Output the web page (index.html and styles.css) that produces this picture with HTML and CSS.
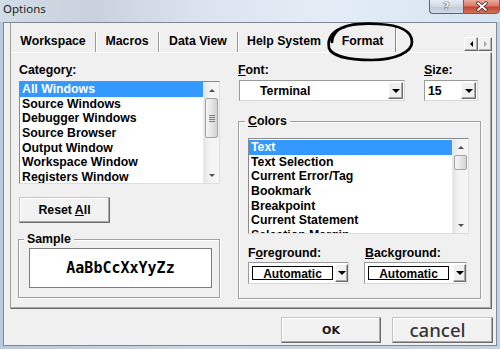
FILE: index.html
```html
<!DOCTYPE html>
<html>
<head>
<meta charset="utf-8">
<title>Options</title>
<link rel="stylesheet" href="styles.css">
</head>
<body>
<div class="window">
  <div class="titlebar">
    <span class="title">Options</span>
    <div class="caption">
      <div class="cap help"><span class="help-glyph">?</span></div>
      <div class="cap close">
        <svg width="14" height="11" viewBox="0 0 14 11">
          <path d="M3 2 L11 9 M11 2 L3 9" stroke="#3a2a2a" stroke-width="3.4" stroke-linecap="round"/>
          <path d="M3 2 L11 9 M11 2 L3 9" stroke="#ffffff" stroke-width="1.8" stroke-linecap="round"/>
        </svg>
      </div>
    </div>
  </div>
  <div class="client">
    <div class="tabframe">
      <div class="tabrow">
        <div class="tab t1">Workspace</div>
        <div class="tab t2">Macros</div>
        <div class="tab t3">Data View</div>
        <div class="tab t4">Help System</div>
        <div class="tab active">Format</div>
        <div class="tabscroll">
          <span class="ts-btn"><i class="tri-left"></i></span>
          <span class="ts-btn"><i class="tri-right"></i></span>
        </div>
      </div>
      <div class="page">
        <div class="col col-left">
          <div class="label lbl-cat">Categor<u>y</u>:</div>
          <div class="listbox lb-cat">
            <ul class="items">
              <li class="sel">All Windows</li>
              <li>Source Windows</li>
              <li>Debugger Windows</li>
              <li>Source Browser</li>
              <li>Output Window</li>
              <li>Workspace Window</li>
              <li>Registers Window</li>
            </ul>
            <div class="vscroll">
              <div class="sb-btn"><i class="arr-up"></i></div>
              <div class="sb-track">
                <div class="thumb thumb-cat"><span class="grip"></span></div>
              </div>
              <div class="sb-btn"><i class="arr-down"></i></div>
            </div>
          </div>
          <button class="btn reset">Reset <u>A</u>ll</button>
          <div class="group sample">
            <span class="legend">Sample</span>
            <div class="sample-box">AaBbCcXxYyZz</div>
          </div>
        </div>
        <div class="col col-right">
          <div class="pair">
            <div class="field-font">
              <div class="label"><u>F</u>ont:</div>
              <div class="combo combo-font">
                <span class="combo-text font-text">Terminal</span>
                <span class="dd"><i class="arr-dd"></i></span>
              </div>
            </div>
            <div class="field-size">
              <div class="label"><u>S</u>ize:</div>
              <div class="combo combo-size">
                <span class="combo-text size-text">15</span>
                <span class="dd"><i class="arr-dd"></i></span>
              </div>
            </div>
          </div>
          <div class="group colors">
            <span class="legend"><u>C</u>olors</span>
            <div class="listbox lb-colors">
              <ul class="items">
                <li class="sel">Text</li>
                <li>Text Selection</li>
                <li>Current Error/Tag</li>
                <li>Bookmark</li>
                <li>Breakpoint</li>
                <li>Current Statement</li>
                <li>Selection Margin</li>
              </ul>
              <div class="vscroll">
                <div class="sb-btn"><i class="arr-up"></i></div>
                <div class="sb-track">
                  <div class="thumb thumb-colors"></div>
                </div>
                <div class="sb-btn"><i class="arr-down"></i></div>
              </div>
            </div>
            <div class="pair pair-colors">
              <div class="field-fg">
                <div class="label">F<u>o</u>reground:</div>
                <div class="ccombo ccombo-fg">
                  <span class="swatch">Automatic</span>
                  <span class="dd dd-small"><i class="arr-dd"></i></span>
                </div>
              </div>
              <div class="field-bg">
                <div class="label"><u>B</u>ackground:</div>
                <div class="ccombo ccombo-bg">
                  <span class="swatch">Automatic</span>
                  <span class="dd dd-small"><i class="arr-dd"></i></span>
                </div>
              </div>
            </div>
          </div>
        </div>
      </div>
    </div>
    <div class="buttons">
      <button class="btn ok">OK</button>
      <button class="btn cancel">cancel</button>
    </div>
  </div>
  <svg class="annot" width="500" height="349" viewBox="0 0 500 349">
    <path d="M345 27 C333 30 327 38 329 48 C332 57 352 60 372 60 C395 60 412 52 412 42 C412 31 400 25 378 24 C360 23 344 25 337 31 C334 34 332 38 332 42" fill="none" stroke="#000" stroke-width="2.7" stroke-linecap="round"/>
  </svg>
</div>
</body>
</html>
```

FILE: styles.css
```css
* { box-sizing: border-box; }
html, body { margin: 0; padding: 0; }
body {
  width: 500px;
  height: 349px;
  overflow: hidden;
  background: #bfcfe1;
  font-family: "Liberation Sans", Arial, sans-serif;
  color: #000;
}
.window {
  position: relative;
  width: 500px;
  height: 349px;
  display: flex;
  flex-direction: column;
  background: linear-gradient(90deg, #b7c9dc, #c9d7e6 40%, #c2d2e3);
}
.titlebar {
  height: 22px;
  flex: none;
  display: flex;
  align-items: flex-start;
  background: linear-gradient(90deg, #d3dde8 0%, #c8d1dc 18%, #dbe4ee 40%, #e4edf6 65%, #d6e3f0 100%);
}
.title {
  font-family: "Noto Sans", "Open Sans", sans-serif;
  font-size: 11.5px;
  line-height: 17px;
  color: #1c1c1c;
  padding-left: 3px;
}
.caption { margin-left: auto; display: flex; }
.cap {
  height: 15px;
  margin-top: -1px;
  border: 1px solid #56657a;
  display: flex;
  align-items: center;
  justify-content: center;
}
.cap.help {
  width: 34px;
  border-right: none;
  border-radius: 0 0 0 4px;
  background: linear-gradient(#e7edf4, #cfd9e4 50%, #bccad9 51%, #cfdbe8);
}
.help-glyph {
  font-family: "DejaVu Sans", sans-serif;
  font-weight: bold;
  font-size: 11px;
  line-height: 11px;
  color: #f4f6f8;
  text-shadow: 0 0 1px #2a2a2a, 0 0 1px #2a2a2a;
}
.cap.close {
  width: 37px;
  border-radius: 0 0 4px 0;
  background: linear-gradient(#e9ab9c, #d77b68 45%, #c4432f 55%, #d4735a);
}
.client {
  flex: 1;
  margin: 0 3px 3px;
  background: #f0f0f0;
  border: 1px solid #7d8896;
  display: flex;
  flex-direction: column;
}
.tabframe {
  margin-left: 6px;
  width: 482px;
  border-left: 1px solid #a0a0a0;
  display: flex;
  flex-direction: column;
}
.tabrow {
  height: 29px;
  display: flex;
  align-items: flex-end;
}
.tab {
  flex: none;
  height: 20px;
  line-height: 18px;
  text-align: center;
  font-weight: bold;
  font-size: 12.3px;
  border-right: 1px solid #9a9a9a;
  box-shadow: 1px 0 0 #fff;
  white-space: nowrap;
}
.t1 { width: 85px; }
.t2 { width: 63px; }
.t3 { width: 79px; }
.t4 { width: 92px; border-right: none; box-shadow: none; }
.tab.active {
  width: 66px;
  height: 27px;
  padding-top: 7px;
  border-right-color: #8a8a8a;
}
.tabscroll {
  margin-left: auto;
  align-self: flex-start;
  margin-top: 14px;
  display: flex;
}
.ts-btn {
  width: 14px;
  height: 14px;
  border: 1px solid;
  border-color: #fff #6d6d6d #6d6d6d #fff;
  box-shadow: inset -1px -1px #b0b0b0;
  background: #f0f0f0;
  display: flex;
  align-items: center;
  justify-content: center;
}
.tri-left {
  width: 0; height: 0;
  border-top: 3px solid transparent;
  border-bottom: 3px solid transparent;
  border-right: 3px solid #000;
}
.tri-right {
  width: 0; height: 0;
  border-top: 3px solid transparent;
  border-bottom: 3px solid transparent;
  border-left: 3px solid #a8a8a8;
}
.page {
  height: 257px;
  border-top: 1px solid #fbfbfb;
  border-right: 1px solid #6a6a6a;
  border-bottom: 1px solid #6a6a6a;
  box-shadow: inset -1px -1px #a8a8a8;
  display: grid;
  grid-template-columns: 202px 243px;
  column-gap: 18px;
  padding: 10px 0 0 7px;
  align-items: start;
}
.col { display: flex; flex-direction: column; align-items: flex-start; }
.label {
  font-weight: bold;
  font-size: 12.3px;
  line-height: 14px;
  white-space: nowrap;
}
.lbl-cat { margin-left: 1px; }
.listbox {
  display: flex;
  background: #fff;
  border: 1px solid;
  border-color: #8a8a8a #dedede #dedede #8a8a8a;
  overflow: hidden;
}
.lb-cat { margin: 4px 0 0 1px; width: 201px; height: 103px; }
.items {
  flex: 1;
  list-style: none;
  margin: 0;
  padding: 0;
  overflow: hidden;
}
.items li {
  height: 14.7px;
  line-height: 14.7px;
  padding-left: 2px;
  font-weight: bold;
  font-size: 12.3px;
  white-space: nowrap;
}
.items li.sel { background: #3399ff; color: #fff; }
.lb-colors .items { padding-top: 1px; }
.vscroll {
  width: 16px;
  flex: none;
  display: flex;
  flex-direction: column;
  background: linear-gradient(90deg, #e4e4e4, #f3f3f3 35%, #f6f6f6);
  border-left: 1px solid #ebebeb;
}
.sb-btn {
  height: 16px;
  flex: none;
  display: flex;
  align-items: center;
  justify-content: center;
}
.sb-track { flex: 1; }
.thumb {
  margin: 0 1px;
  border: 1px solid #a3a3a3;
  border-radius: 2px;
  background: linear-gradient(90deg, #f6f6f6, #e6e6e6 50%, #d3d3d3);
  display: flex;
  align-items: center;
  justify-content: center;
}
.thumb-cat { height: 40px; }
.thumb-colors { height: 15px; }
.grip {
  width: 6px;
  height: 7px;
  background: repeating-linear-gradient(180deg, #7d7d7d 0 1px, transparent 1px 2px);
}
.arr-up {
  width: 0; height: 0;
  border-left: 3px solid transparent;
  border-right: 3px solid transparent;
  border-bottom: 3px solid #505050;
}
.arr-down {
  width: 0; height: 0;
  border-left: 3px solid transparent;
  border-right: 3px solid transparent;
  border-top: 3px solid #505050;
}
.btn {
  font-family: "Liberation Sans", Arial, sans-serif;
  font-weight: bold;
  font-size: 12.3px;
  color: #000;
  background: #f2f2f2;
  border: 1px solid;
  border-color: #c4c4c4 #6d6d6d #6d6d6d #c4c4c4;
  box-shadow: inset -1px -1px #a8a8a8, inset 1px 1px #fff;
  padding: 0;
  margin: 0;
}
.reset { margin: 13px 0 0 1px; width: 91px; height: 26px; }
.group {
  border: 1px solid #a0a0a0;
  box-shadow: inset 1px 1px #fff, 1px 1px 0 #fff;
  display: flex;
  flex-direction: column;
  align-items: flex-start;
}
.legend {
  display: block;
  margin-top: -8px;
  padding: 0 3px;
  background: #f0f0f0;
  font-weight: bold;
  font-size: 12.3px;
  line-height: 14px;
  white-space: nowrap;
}
.sample {
  margin-top: 16px;
  width: 202px;
  padding-bottom: 9px;
}
.sample .legend { margin-left: 5px; }
.sample-box {
  margin: 2px 0 0 10px;
  width: 183px;
  height: 40px;
  background: #fff;
  border: 1px solid #7e7e7e;
  display: flex;
  align-items: center;
  justify-content: center;
  font-family: "DejaVu Sans Mono", "Liberation Mono", monospace;
  font-weight: bold;
  font-size: 15px;
  color: #000;
}
.pair { display: flex; }
.field-font { width: 186px; }
.combo {
  margin-top: 3px;
  height: 21px;
  background: #fff;
  border: 1px solid;
  border-color: #9a9a9a #d8d8d8 #d8d8d8 #9a9a9a;
  display: flex;
  align-items: center;
  padding-right: 1px;
}
.combo-font { margin-left: 1px; width: 166px; }
.combo-size { width: 54px; }
.combo-text {
  flex: 1;
  font-weight: bold;
  font-size: 12.3px;
  white-space: nowrap;
}
.font-text { padding-left: 20px; }
.size-text { padding-left: 3px; }
.dd {
  width: 15px;
  height: 17px;
  border: 1px solid;
  border-color: #fff #6d6d6d #6d6d6d #fff;
  box-shadow: inset -1px -1px #a8a8a8;
  background: #f0f0f0;
  display: flex;
  align-items: center;
  justify-content: center;
}
.arr-dd {
  width: 0; height: 0;
  border-left: 4px solid transparent;
  border-right: 4px solid transparent;
  border-top: 4px solid #000;
}
.colors {
  margin-top: 20px;
  width: 243px;
  padding-bottom: 14px;
}
.colors .legend { margin-left: 6px; }
.lb-colors { margin: 10px 0 0 9px; width: 221px; height: 96px; }
.pair-colors { margin: 12px 0 0 9px; }
.field-fg { width: 116px; }
.field-bg .label { margin-left: 1px; }
.ccombo {
  margin-top: 2px;
  height: 22px;
  background: #fff;
  border: 1px solid;
  border-color: #9a9a9a #d8d8d8 #d8d8d8 #9a9a9a;
  display: flex;
  align-items: center;
  padding-left: 3px;
}
.ccombo-fg { width: 101px; }
.ccombo-bg { width: 103px; }
.swatch {
  width: 81px;
  height: 14px;
  border: 1px solid #000;
  background: #fff;
  text-align: center;
  font-weight: bold;
  font-size: 12px;
  line-height: 15.5px;
  white-space: nowrap;
}
.dd-small { margin-left: auto; width: 13px; height: 18px; }
.buttons {
  margin-top: 8px;
  display: flex;
  justify-content: flex-end;
  gap: 11px;
  padding-right: 3px;
}
.ok {
  width: 100px;
  height: 26px;
  font-family: "DejaVu Sans", sans-serif;
  font-size: 11px;
  color: #151515;
}
.cancel {
  width: 101px;
  height: 26px;
  font-family: "Noto Sans", "Open Sans", sans-serif;
  font-weight: 500;
  font-size: 18.6px;
  line-height: 22px;
  color: #353535;
  padding-right: 10px;
}
.annot {
  position: absolute;
  left: 0;
  top: 0;
  pointer-events: none;
}
```
